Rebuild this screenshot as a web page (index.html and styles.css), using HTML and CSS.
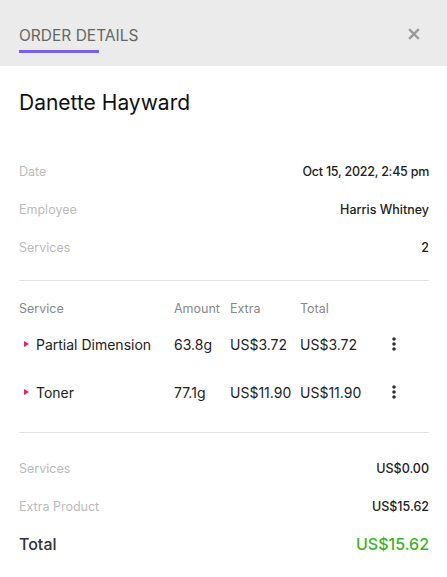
FILE: index.html
```html
<!DOCTYPE html>
<html>
<head>
    <title>Order Details</title>
    <link rel="stylesheet" href="styles.css">
</head>
<body>
    <div class="panel">
        <div class="header">
            <div class="tab">ORDER DETAILS</div>
            <button class="close" aria-label="Close">
                <svg width="12" height="12" viewBox="0 0 12 12"><path d="M2 2L10 10M10 2L2 10" stroke="#9a9a9a" stroke-width="2.4" stroke-linecap="square"/></svg>
            </button>
        </div>

        <div class="content">
            <h1 class="name">Danette Hayward</h1>

            <div class="info">
                <div class="row"><span class="label">Date</span><span class="value date">Oct 15, 2022, 2:45 pm</span></div>
                <div class="row"><span class="label">Employee</span><span class="value">Harris Whitney</span></div>
                <div class="row"><span class="label">Services</span><span class="value">2</span></div>
            </div>

            <hr class="divider">

            <div class="services">
                <div class="thead">
                    <span>Service</span>
                    <span>Amount</span>
                    <span>Extra</span>
                    <span>Total</span>
                    <span></span>
                </div>
                <div class="item">
                    <span class="svc"><i class="caret"></i>Partial Dimension</span>
                    <span>63.8g</span>
                    <span>US$3.72</span>
                    <span>US$3.72</span>
                    <span class="more"><svg width="4" height="14" viewBox="0 0 4 14"><circle cx="2" cy="2" r="1.8"/><circle cx="2" cy="7" r="1.8"/><circle cx="2" cy="12" r="1.8"/></svg></span>
                </div>
                <div class="item">
                    <span class="svc"><i class="caret"></i>Toner</span>
                    <span>77.1g</span>
                    <span>US$11.90</span>
                    <span>US$11.90</span>
                    <span class="more"><svg width="4" height="14" viewBox="0 0 4 14"><circle cx="2" cy="2" r="1.8"/><circle cx="2" cy="7" r="1.8"/><circle cx="2" cy="12" r="1.8"/></svg></span>
                </div>
            </div>

            <hr class="divider">

            <div class="summary">
                <div class="row"><span class="label">Services</span><span class="value">US$0.00</span></div>
                <div class="row"><span class="label">Extra Product</span><span class="value">US$15.62</span></div>
                <div class="row total"><span class="label">Total</span><span class="value">US$15.62</span></div>
            </div>
        </div>
    </div>
</body>
</html>
```

FILE: styles.css
```css
body {
    margin: 0;
    padding: 0;
    font-family: Inter, "Noto Sans", sans-serif;
    background-color: #fff;
}

.header {
    display: flex;
    justify-content: space-between;
    align-items: flex-start;
    height: 66px;
    padding: 0 19px;
    background-color: #ebebeb;
}

.tab {
    padding-top: 26px;
    font-size: 15.5px;
    line-height: 20px;
    color: #666;
}

.tab::after {
    content: "";
    display: block;
    width: 80px;
    height: 3px;
    margin-top: 4px;
    background-color: #7b5ff0;
}

.close {
    margin-top: 28px;
    margin-right: 8px;
    padding: 0;
    border: none;
    background: none;
    cursor: pointer;
    line-height: 0;
}

.content {
    padding: 0 18px 0 19px;
}

.name {
    margin: 25px 0 37px;
    font-size: 21px;
    font-weight: 400;
    line-height: 24px;
    color: #111;
}

.row {
    display: flex;
    justify-content: space-between;
    align-items: center;
    height: 38px;
    font-size: 12.5px;
}

.label {
    color: #bbb;
}

.value {
    color: #222;
    font-weight: 500;
}

.date {
    letter-spacing: -0.25px;
}

.divider {
    margin: 14px 0 0;
    border: none;
    border-top: 1px solid #e4e4e4;
}

.services {
    margin-top: 15px;
}

.thead,
.item {
    display: grid;
    grid-template-columns: 155px 56px 70px 82px 24px;
    align-items: center;
}

.thead {
    height: 24px;
    font-size: 12.5px;
    color: #888;
}

.item {
    height: 48px;
    font-size: 14px;
    color: #222;
}

.svc {
    display: flex;
    align-items: center;
}

.caret {
    width: 0;
    height: 0;
    margin: 0 7px 0 5px;
    border-top: 3.5px solid transparent;
    border-bottom: 3.5px solid transparent;
    border-left: 5px solid #ec1f6a;
}

.more {
    display: flex;
    justify-content: center;
    fill: #333;
}

.services + .divider {
    margin-top: 16px;
}

.summary {
    margin-top: 16px;
}

.total {
    font-size: 16px;
}

.total .label {
    color: #333;
    font-weight: 500;
}

.total .value {
    color: #3db322;
}
```
